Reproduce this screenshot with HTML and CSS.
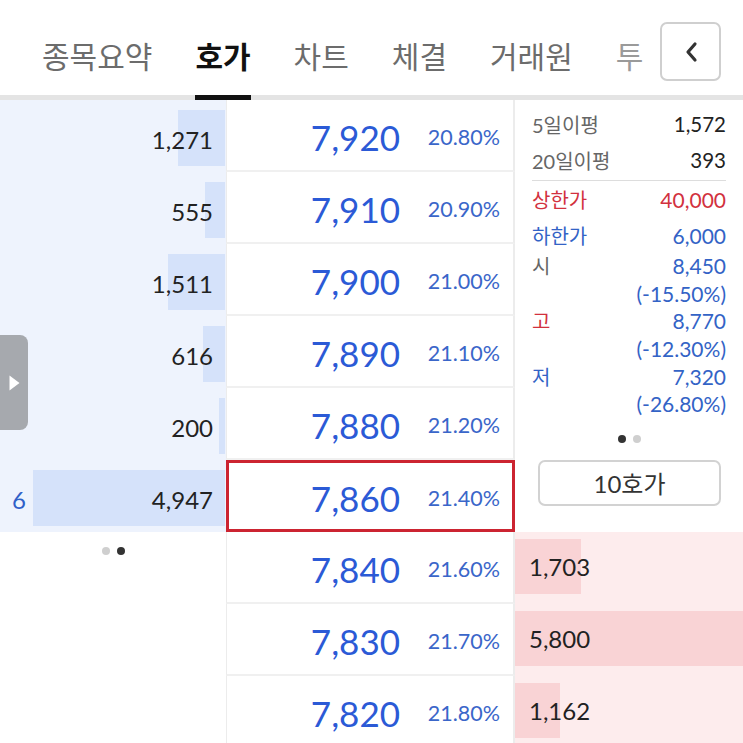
FILE: index.html
```html
<!DOCTYPE html>
<html lang="ko">
<head>
<meta charset="utf-8">
<link rel="stylesheet" href="styles.css">
</head>
<body>
<div class="page">
  <header class="header">
    <nav class="tabs">
      <span class="tab">종목요약</span>
      <span class="tab active">호가</span>
      <span class="tab">차트</span>
      <span class="tab">체결</span>
      <span class="tab">거래원</span>
      <span class="tab fade">투</span>
    </nav>
    <button class="back" type="button">
      <svg width="14" height="22" viewBox="0 0 14 22"><path d="M11 3 L4 11 L11 19" fill="none" stroke="#333" stroke-width="3.2" stroke-linecap="round" stroke-linejoin="round"/></svg>
    </button>
  </header>

  <main class="book">
    <div class="ask" style="--w:47px"><span class="qty">1,271</span></div>
    <div class="mid"><span class="price">7,920</span><span class="pct">20.80%</span></div>
    <aside class="info">
      <div class="irow"><span class="lbl">5일이평</span><span class="val">1,572</span></div>
      <div class="irow"><span class="lbl">20일이평</span><span class="val">393</span></div>
      <div class="sep"></div>
      <div class="irow up"><span>상한가</span><span class="num">40,000</span></div>
      <div class="irow down"><span>하한가</span><span class="num">6,000</span></div>
      <div class="ohl">
        <div class="orow"><span class="lbl">시</span><span class="bv num">8,450</span></div>
        <div class="orow end"><span class="bv num">(-15.50%)</span></div>
        <div class="orow"><span class="red">고</span><span class="bv num">8,770</span></div>
        <div class="orow end"><span class="bv num">(-12.30%)</span></div>
        <div class="orow"><span class="bv">저</span><span class="bv num">7,320</span></div>
        <div class="orow end"><span class="bv num">(-26.80%)</span></div>
      </div>
      <div class="dots"><i class="dot on"></i><i class="dot"></i></div>
      <button class="ten" type="button">10호가</button>
    </aside>

    <div class="ask" style="--w:20px"><span class="qty">555</span></div>
    <div class="mid"><span class="price">7,910</span><span class="pct">20.90%</span></div>

    <div class="ask" style="--w:57px"><span class="qty">1,511</span></div>
    <div class="mid"><span class="price">7,900</span><span class="pct">21.00%</span></div>

    <div class="ask side-host" style="--w:22px">
      <span class="side-tab"><svg width="11" height="16" viewBox="0 0 11 16"><path d="M0.5 0.5 L10.5 8 L0.5 15.5 Z" fill="#fff"/></svg></span>
      <span class="qty">616</span>
    </div>
    <div class="mid"><span class="price">7,890</span><span class="pct">21.10%</span></div>

    <div class="ask" style="--w:6px"><span class="qty">200</span></div>
    <div class="mid"><span class="price">7,880</span><span class="pct">21.20%</span></div>

    <div class="ask last" style="--w:192px"><span class="cnt">6</span><span class="qty">4,947</span></div>
    <div class="mid current"><span class="price">7,860</span><span class="pct">21.40%</span></div>

    <div class="pager"><div class="dots"><i class="dot"></i><i class="dot on"></i></div></div>

    <div class="mid"><span class="price">7,840</span><span class="pct">21.60%</span></div>
    <div class="bid" style="--w:66px"><span class="qty">1,703</span></div>

    <div class="mid"><span class="price">7,830</span><span class="pct">21.70%</span></div>
    <div class="bid" style="--w:228px"><span class="qty">5,800</span></div>

    <div class="mid"><span class="price">7,820</span><span class="pct">21.80%</span></div>
    <div class="bid" style="--w:45px"><span class="qty">1,162</span></div>
  </main>
</div>
</body>
</html>
```

FILE: styles.css
```css
* { box-sizing: border-box; }
html, body { margin: 0; padding: 0; background: #fff; }
body {
  font-family: Lato, "Noto Sans CJK KR", sans-serif;
  color: #222;
  width: 743px;
  height: 743px;
  overflow: hidden;
}
.page { width: 743px; }

.header {
  display: flex;
  height: 100px;
  box-shadow: inset 0 -5px 0 #e4e4e4;
}
.tabs {
  flex: 1;
  min-width: 0;
  display: flex;
  gap: 43px;
  padding-left: 42px;
  white-space: nowrap;
}
.tab {
  font-family: "Noto Sans CJK KR", sans-serif;
  font-size: 30px;
  color: #6c6c6c;
  height: 100px;
  padding-top: 15px;
  display: flex;
  align-items: center;
  border-bottom: 5px solid transparent;
}
.tab.active {
  color: #111;
  font-weight: 700;
  border-bottom-color: #111;
}
.tab.fade { color: #9a9a9a; }
.back {
  flex: none;
  width: 61px;
  height: 59px;
  margin: 22px 22px 0 10px;
  border: 2px solid #cfcfcf;
  border-radius: 7px;
  background: #fff;
  display: flex;
  align-items: center;
  justify-content: center;
  padding: 0;
}

.book {
  display: grid;
  grid-template-columns: 226px 289px 228px;
  grid-template-rows: repeat(9, 72px);
}

.ask {
  grid-column: 1;
  display: flex;
  align-items: center;
  justify-content: flex-end;
  padding: 6px 13px 0 0;
  background: linear-gradient(#d5e2fa, #d5e2fa) right 1px top 10px / var(--w) 56px no-repeat, #eef3fd;
}
.qty { font-size: 24px; color: #222; }
.ask.last { justify-content: space-between; padding-left: 12px; }
.cnt { font-size: 24px; color: #3060c8; }

.side-host { justify-content: space-between; }
.side-tab {
  position: relative;
  z-index: 1;
  align-self: flex-start;
  width: 28px;
  height: 95px;
  margin-top: 13px;
  background: #a6a9ae;
  border-radius: 0 8px 8px 0;
  display: flex;
  align-items: center;
  padding-left: 9px;
}

.mid {
  grid-column: 2;
  display: flex;
  align-items: center;
  justify-content: flex-end;
  padding: 4px 13px 0 0;
  border-left: 1px solid #ececec;
  border-right: 2px solid #ececec;
  border-bottom: 2px solid #f0f0f0;
  background: #fff;
}
.price { font-size: 35px; color: #2b5ad6; }
.pct { width: 100px; text-align: right; font-size: 21.5px; color: #3a66c9; }
.mid.current {
  border: 3px solid #cc2431;
  padding: 4px 12px 0 0;
}

.info {
  grid-column: 3;
  grid-row: 1 / 7;
  padding: 6px 17px 0 17px;
  font-size: 20px;
}
.irow {
  display: flex;
  justify-content: space-between;
  align-items: center;
  height: 36px;
}
.lbl { color: #666; }
.val { color: #222; font-size: 20.5px; }
.num { font-size: 21px; }
.sep { height: 1px; background: #ddd; margin: 2px 0 0; }
.up { color: #d2313e; }
.down { color: #3363c6; }
.ohl { margin-top: -1px; }
.orow {
  display: flex;
  justify-content: space-between;
  align-items: center;
  height: 27.6px;
}
.orow.end { justify-content: flex-end; }
.bv { color: #3363c6; }
.red { color: #d2313e; }

.dots {
  display: flex;
  justify-content: center;
  gap: 7px;
  margin-top: 17px;
}
.dot {
  width: 8px;
  height: 8px;
  border-radius: 50%;
  background: #cfcfcf;
}
.dot.on { background: #333; }

.ten {
  display: block;
  width: 183px;
  height: 46px;
  margin: 17px 0 0 6px;
  border: 2px solid #d2d2d2;
  border-radius: 7px;
  background: #fff;
  font-family: Lato, "Noto Sans CJK KR", sans-serif;
  font-size: 24px;
  color: #333;
  padding: 0;
}

.pager {
  grid-column: 1;
  grid-row: 7 / 10;
  background: #fff;
  padding-top: 15px;
}
.pager .dots { margin-top: 0; }

.bid {
  grid-column: 3;
  display: flex;
  align-items: center;
  padding: 0 0 3px 14px;
  background: linear-gradient(#f9d3d5, #f9d3d5) left 0 top 7px / var(--w) 55px no-repeat, #fdeced;
}
```
